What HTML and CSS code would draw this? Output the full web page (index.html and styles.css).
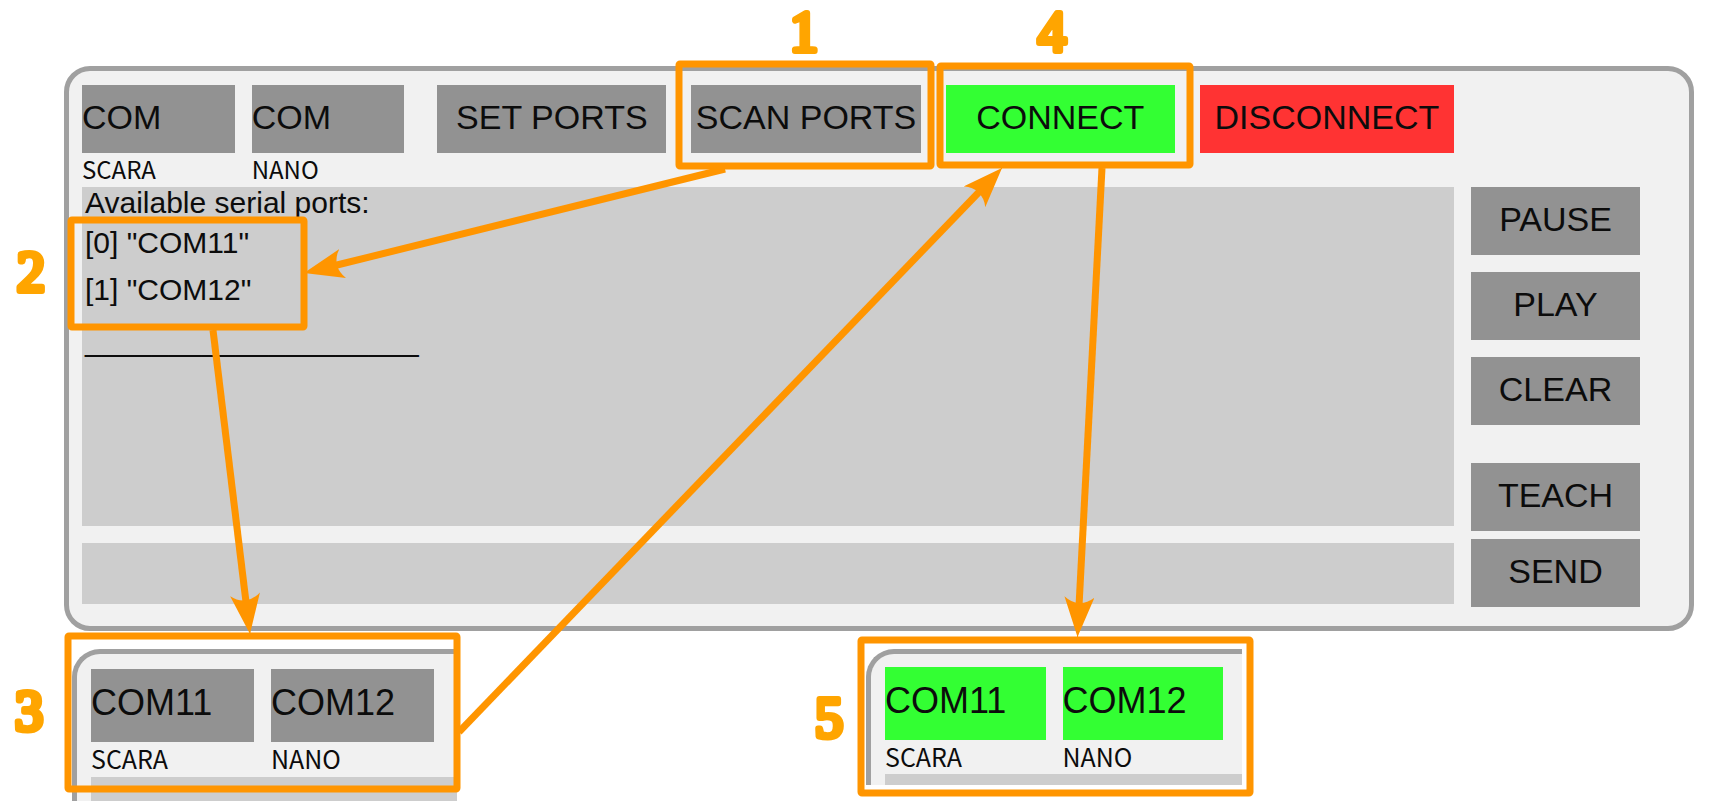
FILE: index.html
```
<!DOCTYPE html>
<html lang="en">
<head>
<meta charset="utf-8">
<title>Serial port connection guide</title>
<link rel="stylesheet" href="styles.css">
</head>
<body>
<main class="guide">
  <section class="panel">
    <div class="toolbar">
      <div class="ports">
        <div class="port"><input class="port-input" id="scara" type="text" value="COM"><label for="scara">SCARA</label></div>
        <div class="port"><input class="port-input" id="nano" type="text" value="COM"><label for="nano">NANO</label></div>
      </div>
      <button class="btn" type="button">SET PORTS</button>
      <button class="btn" type="button">SCAN PORTS</button>
      <button class="btn btn-connect" type="button">CONNECT</button>
      <button class="btn btn-disconnect" type="button">DISCONNECT</button>
    </div>
    <div class="workspace">
      <div class="console">
        <div class="log" role="log">
          <p class="log-title">Available serial ports:</p>
          <p>[0] "COM11"</p>
          <p>[1] "COM12"</p>
          <p class="log-rule">____________________</p>
        </div>
        <input class="command" type="text" aria-label="Command">
      </div>
      <div class="actions">
        <button class="btn" type="button">PAUSE</button>
        <button class="btn" type="button">PLAY</button>
        <button class="btn" type="button">CLEAR</button>
        <button class="btn btn-teach" type="button">TEACH</button>
        <button class="btn btn-send" type="button">SEND</button>
      </div>
    </div>
  </section>

  <div class="results">
    <section class="excerpt">
      <div class="ports">
        <div class="port"><input class="port-input" id="scara-set" type="text" value="COM11"><label for="scara-set">SCARA</label></div>
        <div class="port"><input class="port-input" id="nano-set" type="text" value="COM12"><label for="nano-set">NANO</label></div>
      </div>
      <div class="log-edge"></div>
    </section>
    <section class="excerpt excerpt-connected">
      <div class="ports">
        <div class="port"><input class="port-input" id="scara-on" type="text" value="COM11"><label for="scara-on">SCARA</label></div>
        <div class="port"><input class="port-input" id="nano-on" type="text" value="COM12"><label for="nano-on">NANO</label></div>
      </div>
      <div class="log-edge"></div>
    </section>
  </div>

  <svg class="notes" viewBox="0 0 1717 811" aria-label="Steps 1 to 5">
    <defs>
      <marker id="head" markerUnits="userSpaceOnUse" markerWidth="42" markerHeight="32" refX="40" refY="15" orient="auto">
        <path class="head" d="M40 15 L0 0 Q6 7 6 15 Q6 23 0 30 Z"/>
      </marker>
    </defs>
    <g class="frames">
      <rect x="679" y="64" width="252" height="102" rx="1"/>
      <rect x="940" y="66" width="250" height="99" rx="1"/>
      <rect x="71" y="220" width="233" height="107" rx="1"/>
      <rect x="68" y="636" width="389" height="153" rx="1"/>
      <rect x="861" y="640" width="389" height="153" rx="1"/>
    </g>
    <g class="arrows">
      <path d="M725 169 L335 265.5"/><path class="tip" d="M335 265.5 L304 273"/>
      <path d="M213 330 L246 602"/><path class="tip" d="M246 602 L250 634"/>
      <path d="M459 732 L981 190"/><path class="tip" d="M981 190 L1002 168"/>
      <path d="M1102 168 L1079 606"/><path class="tip" d="M1079 606 L1077.5 637"/>
    </g>
    <g class="steps">
      <text x="804" y="51">1</text>
      <text x="31" y="291">2</text>
      <text x="29" y="730">3</text>
      <text x="1052" y="51">4</text>
      <text x="829" y="737">5</text>
    </g>
  </svg>
</main>
</body>
</html>
```
FILE: styles.css
```
* { box-sizing: border-box; }

body {
  margin: 0;
  background: #fff;
  color: #0c0c0c;
  font-family: "Liberation Sans", Arial, sans-serif;
}

.guide {
  position: relative;
  padding: 66px 23px 0 64px;
}

.panel {
  padding: 14px 49px 19px 13px;
  background: #f1f1f1;
  border: 5px solid #a0a0a0;
  border-radius: 26px;
}

.toolbar {
  display: flex;
  align-items: flex-start;
  gap: 25px;
  margin-right: 186px;
}

.toolbar .ports { flex: 322 1 0; margin-right: 8px; }
.toolbar .btn { flex: 229 1 0; }
.toolbar .btn-disconnect { flex-grow: 254; }

.ports { display: flex; gap: 17px; }

.port {
  display: flex;
  flex: 1 1 0;
  flex-direction: column;
  min-width: 0;
}

.port label {
  height: 34px;
  font-family: "Noto Sans CJK SC", sans-serif;
  font-size: 24px;
  line-height: 32px;
}

.btn,
.port-input {
  min-width: 0;
  height: 68px;
  margin: 0;
  padding: 0;
  border: 0;
  border-radius: 0;
  background: #929292;
  color: #0c0c0c;
  font: 34px "Liberation Sans", Arial, sans-serif;
  white-space: nowrap;
}

.port-input { width: 100%; padding-bottom: 4px; }
.btn { padding-bottom: 4px; }
.btn-connect { background: #33ff33; }
.btn-disconnect { background: #ff3333; }

.workspace { display: flex; gap: 17px; }

.console {
  display: flex;
  flex: 1;
  flex-direction: column;
  min-width: 0;
}

.log {
  height: 339px;
  padding-left: 3px;
  background: #cdcdcd;
  font-size: 30px;
  line-height: 47px;
}

.log p { margin: 0; }
.log .log-title { line-height: 32px; }
.log .log-rule { margin-top: 4px; }

.command {
  height: 61px;
  margin: 17px 0 0;
  padding: 0 3px;
  border: 0;
  background: #cdcdcd;
  font: 30px "Liberation Sans", Arial, sans-serif;
}

.actions {
  display: flex;
  flex-direction: column;
  gap: 17px;
  width: 169px;
}

.btn-teach { margin-top: 21px; }
.btn-send { margin-top: -9px; }

.results {
  display: flex;
  gap: 409px;
  padding: 18px 0 0 8px;
}

.excerpt {
  width: 385px;
  height: 152px;
  padding: 15px 0 0 14px;
  background: #f1f1f1;
  border: solid #a0a0a0;
  border-width: 5px 0 0 5px;
  border-top-left-radius: 28px;
}

.excerpt .ports { margin-right: 23px; }

.excerpt .port-input {
  height: 73px;
  padding-bottom: 5px;
  font-size: 36px;
}

.excerpt .port label {
  height: 35px;
  font-size: 25px;
  line-height: 32px;
}

.log-edge { height: 24px; background: #cdcdcd; }

.excerpt-connected {
  width: 376px;
  height: 136px;
  padding-top: 13px;
}

.excerpt-connected .ports { margin-right: 19px; }
.excerpt-connected .port-input { background: #33ff33; }
.excerpt-connected .port label { height: 34px; }
.excerpt-connected .log-edge { height: 11px; }

.notes {
  position: absolute;
  top: 0;
  left: 0;
  width: 100%;
  pointer-events: none;
}

.frames rect,
.arrows path {
  fill: none;
  stroke: #ff9500;
  stroke-width: 7;
  stroke-linejoin: round;
}

.arrows .tip { stroke-width: 1; marker-end: url(#head); }
.notes .head { fill: #ff9500; stroke: none; }

.steps text {
  fill: #ffa500;
  stroke: #ffa500;
  stroke-width: 6;
  stroke-linejoin: round;
  font: 56px "Liberation Serif", "Times New Roman", serif;
  text-anchor: middle;
}
```
